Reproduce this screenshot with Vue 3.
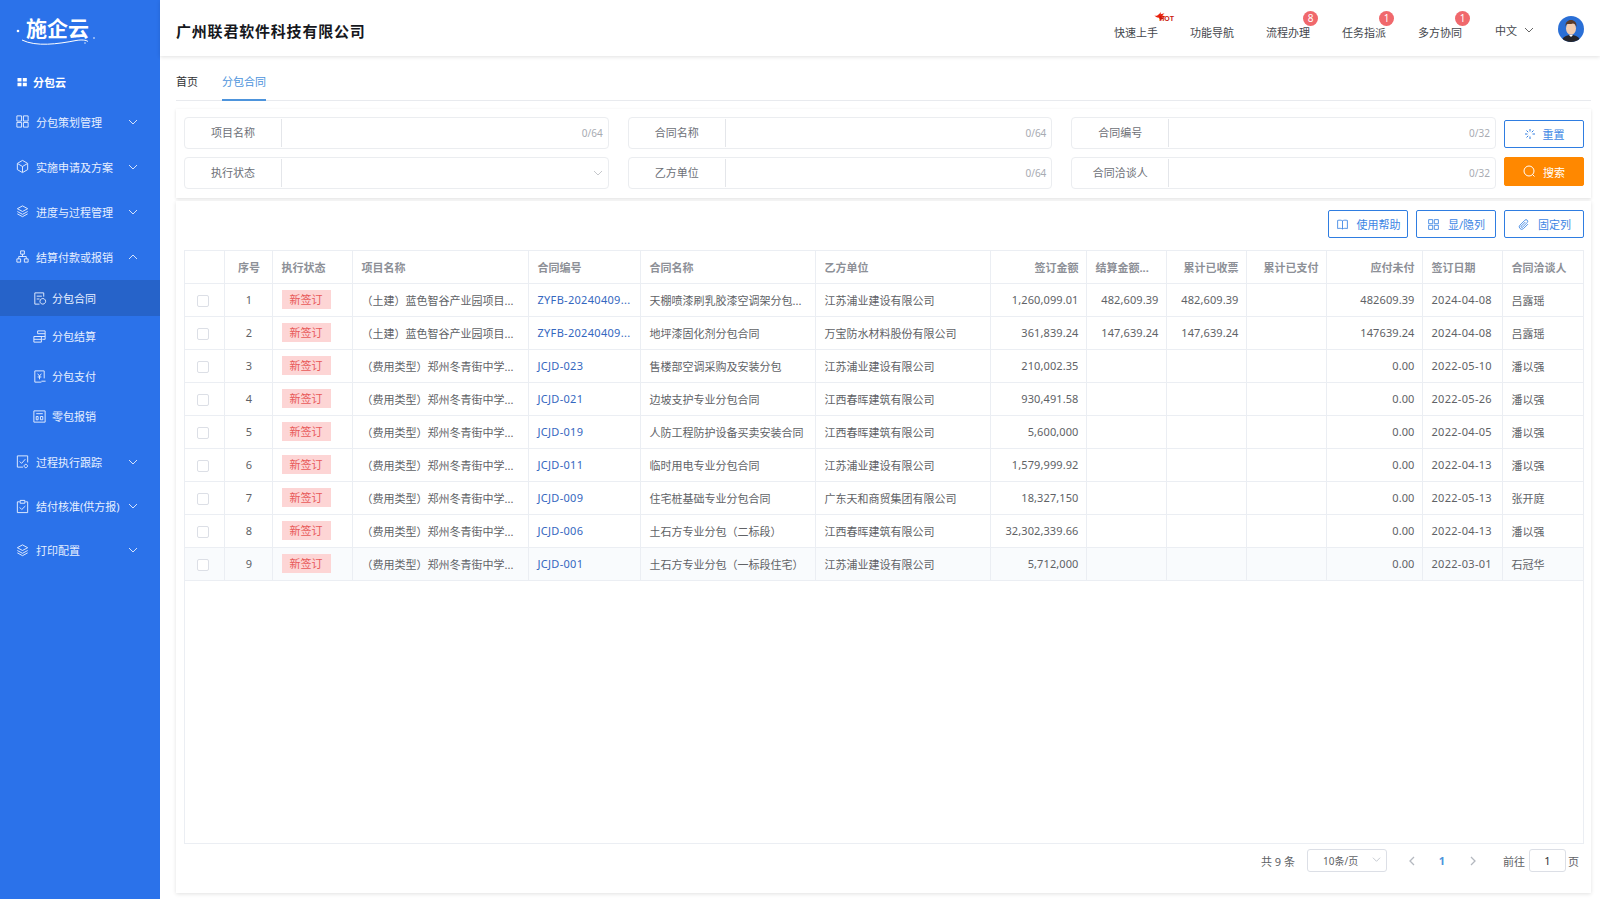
<script setup>
const layers = ['M8 2l5.500 3L8 8 2.500 5z', 'M2.500 8L8 11l5.500-3', 'M2.500 10.500L8 13.500l5.500-3']
const grid = ['M2 2h5v5H2z', 'M9 2h5v5H9z', 'M2 9h5v5H2z', 'M9 9h5v5H9z']

const menus = [
  { name: '分包策划管理', icon: ['M2 2h5v5.500H2z', 'M9 2h5v5.500H9z', 'M2 9h5v5H2z', 'M9 9h5v5H9z'], top: true },
  { name: '实施申请及方案', icon: ['M8 1.500l5.500 3.200v6.600L8 14.500l-5.500-3.200V4.700z', 'M3 5l5 3 5-3', 'M8 8v6'], top: true },
  { name: '进度与过程管理', icon: layers, top: true },
  { name: '结算付款或报销', icon: ['M6 2h4v3.500H6z', 'M2 10.500h4V14H2z', 'M10 10.500h4V14h-4z', 'M8 5.500V8M4 10.500V8h8v2.500'], open: true, top: true },
  { name: '分包合同', icon: ['M12.500 6V2H3v12h5', 'M5 5.500h5.500M5 8.500h3', 'M11.500 8a3 3 0 1 0 .01 0z'], active: true },
  { name: '分包结算', icon: ['M6 5V2h8v9h-3', 'M6 5h8M6 8h8', 'M2 8h8v6H2z', 'M2 11h8'] },
  { name: '分包支付', icon: ['M13 10V2H3v12h7', 'M6 5l2 2.500L10 5M8 7.500V11M6 8.500h4', 'M10 13h4.500'] },
  { name: '零包报销', icon: ['M2 2h12v12H2z', 'M4.500 5h7', 'M4.500 8h2v3.500h-2zM9 8h2.500v3.500H9z'] },
  { name: '过程执行跟踪', icon: ['M13.500 9V2h-11v12h6', 'M5 8l2 2 4-4.500', 'M11.500 11a1.800 1.800 0 1 0 .01 0z'], top: true },
  { name: '结付核准(供方报)', icon: ['M5 3H2.500v11.500h11V3H11', 'M5.500 1.500h5v3h-5z', 'M5 9l2.200 2.200L11 7.500'], top: true },
  { name: '打印配置', icon: layers, top: true }
]

const navs = [
  { name: '快速上手', hot: true },
  { name: '功能导航' },
  { name: '流程办理', badge: 8 },
  { name: '任务指派', badge: 1 },
  { name: '多方协同', badge: 1 }
]

const filters = [
  { label: '项目名称', count: '0/64' },
  { label: '合同名称', count: '0/64' },
  { label: '合同编号', count: '0/32' },
  { label: '执行状态', select: true },
  { label: '乙方单位', count: '0/64' },
  { label: '合同洽谈人', count: '0/32' }
]

const tools = [
  { name: '使用帮助', icon: ['M8 3.500C6.500 2.500 4 2.500 2 3v10c2-.5 4.500-.5 6 .5 1.500-1 4-1 6-.5V3c-2-.5-4.500-.5-6 .5z', 'M8 3.500v10'] },
  { name: '显/隐列', icon: grid },
  { name: '固定列', icon: ['M13.500 7.500l-5.500 5.500a3 3 0 0 1-4.300-4.300l6-6a2 2 0 0 1 2.900 2.800l-5.800 5.800a1 1 0 0 1-1.500-1.400l5-5'] }
]

const widths = [39, 48, 80, 176, 112, 175, 175, 96, 80, 80, 80, 96, 80, 81]

const fee = '（费用类型）郑州冬青街中学...'
const rows = [
  { project: '（土建）蓝色智谷产业园项目...', code: 'ZYFB-20240409...', name: '天棚喷漆刷乳胶漆空调架分包...', unit: '江苏浦业建设有限公司', amount: '1,260,099.01', settled: '482,609.39', invoiced: '482,609.39', unpaid: '482609.39', date: '2024-04-08', person: '吕露瑶' },
  { project: '（土建）蓝色智谷产业园项目...', code: 'ZYFB-20240409...', name: '地坪漆固化剂分包合同', unit: '万宝防水材料股份有限公司', amount: '361,839.24', settled: '147,639.24', invoiced: '147,639.24', unpaid: '147639.24', date: '2024-04-08', person: '吕露瑶' },
  { project: fee, code: 'JCJD-023', name: '售楼部空调采购及安装分包', unit: '江苏浦业建设有限公司', amount: '210,002.35', unpaid: '0.00', date: '2022-05-10', person: '潘以强' },
  { project: fee, code: 'JCJD-021', name: '边坡支护专业分包合同', unit: '江西春晖建筑有限公司', amount: '930,491.58', unpaid: '0.00', date: '2022-05-26', person: '潘以强' },
  { project: fee, code: 'JCJD-019', name: '人防工程防护设备买卖安装合同', unit: '江西春晖建筑有限公司', amount: '5,600,000', unpaid: '0.00', date: '2022-04-05', person: '潘以强' },
  { project: fee, code: 'JCJD-011', name: '临时用电专业分包合同', unit: '江苏浦业建设有限公司', amount: '1,579,999.92', unpaid: '0.00', date: '2022-04-13', person: '潘以强' },
  { project: fee, code: 'JCJD-009', name: '住宅桩基础专业分包合同', unit: '广东天和商贸集团有限公司', amount: '18,327,150', unpaid: '0.00', date: '2022-05-13', person: '张开庭' },
  { project: fee, code: 'JCJD-006', name: '土石方专业分包（二标段）', unit: '江西春晖建筑有限公司', amount: '32,302,339.66', unpaid: '0.00', date: '2022-04-13', person: '潘以强' },
  { project: fee, code: 'JCJD-001', name: '土石方专业分包（一标段住宅）', unit: '江苏浦业建设有限公司', amount: '5,712,000', unpaid: '0.00', date: '2022-03-01', person: '石冠华' }
]
</script>

<template>
  <div class="page">
    <aside class="sidebar">
      <div class="logo">
        <span class="logo-text">施企云</span>
        <svg class="logo-swoosh" width="95" height="45" viewBox="0 0 95 45">
          <circle cx="8" cy="21" r="1.300" fill="#fff" />
          <path d="M12 30c14 7 36 4 54 .5 6-1 10-.5 12 1" fill="none" stroke="#fff" stroke-width="1" />
          <circle cx="75" cy="33" r=".7" fill="#fff" />
          <circle cx="84" cy="28" r=".8" fill="#fff" />
        </svg>
      </div>
      <div class="home-item">
        <svg width="12" height="12" viewBox="0 0 12 12" fill="#fff">
          <path d="M1.500 2h4v3.500h-4zM6.800 2h4v3.500h-4zM1.500 6.800h4v3.500h-4zM6.800 6.800h4v3.500h-4z" />
        </svg>
        <span>分包云</span>
      </div>
      <div
        v-for="m in menus"
        :key="m.name"
        class="menu-item"
        :class="{ top: m.top, sub: !m.top, active: m.active }"
      >
        <svg class="menu-icon" width="15" height="15" viewBox="0 0 16 16">
          <path v-for="d in m.icon" :key="d" :d="d" />
        </svg>
        <span class="menu-name">{{ m.name }}</span>
        <svg v-if="m.top" class="menu-arrow" width="10" height="10" viewBox="0 0 10 10">
          <path :d="m.open ? 'M1 7l4-4 4 4' : 'M1 3l4 4 4-4'" />
        </svg>
      </div>
    </aside>

    <div class="main">
      <header class="header">
        <div class="company">广州联君软件科技有限公司</div>
        <nav class="nav">
          <div v-for="n in navs" :key="n.name" class="nav-item">
            {{ n.name }}
            <span v-if="n.badge" class="badge">{{ n.badge }}</span>
            <span v-if="n.hot" class="hot">
              <svg width="14" height="9" viewBox="0 0 10 8"><path d="M0 3c2 1 3 0 4-1L6 0 5.500 2 9 1 7 3l3 1-3 1-1 3-2-3C2 5 1 4 0 3z" fill="#e8220e" /></svg>
              <b>HOT</b>
            </span>
          </div>
        </nav>
        <div class="lang">
          中文
          <svg width="10" height="10" viewBox="0 0 10 10"><path d="M1 3l4 4 4-4" fill="none" stroke="#666" /></svg>
        </div>
        <svg class="avatar" width="26" height="26" viewBox="0 0 26 26">
          <defs><clipPath id="avatar-clip"><circle cx="13" cy="13" r="13" /></clipPath></defs>
          <g clip-path="url(#avatar-clip)">
            <rect width="26" height="26" fill="#2a6fd6" />
            <path d="M4 26c0-5 4-7 9-7s9 2 9 7z" fill="#26262c" />
            <path d="M11 19l2 2 2-2z" fill="#fff" />
            <ellipse cx="13" cy="12.500" rx="5" ry="6.300" fill="#f2cdb0" />
            <path d="M7.500 11c-.5-5 2.500-7 5.500-7s6 2 5.500 7c-1-2.500-2-3.500-3.500-3.500-2 .8-5 .5-6 .5-.8.500-1.200 1.500-1.500 3z" fill="#5a3b2a" />
          </g>
        </svg>
      </header>

      <div class="content">
        <div class="tabs">
          <span class="tab">首页</span>
          <span class="tab current">分包合同</span>
        </div>

        <section class="filter-card">
          <div class="fields">
            <div v-for="f in filters" :key="f.label" class="field">
              <label>{{ f.label }}</label>
              <div class="field-input">
                <span v-if="f.count">{{ f.count }}</span>
                <svg v-else width="10" height="10" viewBox="0 0 10 10"><path d="M1 3l4 4 4-4" fill="none" stroke="#c6c8cc" /></svg>
              </div>
            </div>
          </div>
          <div class="actions">
            <button class="btn reset">
              <svg width="12" height="12" viewBox="0 0 12 12"><path d="M6 1v2.500M6 8.500V11M1 6h2.500M8.500 6H11M2.500 2.500l1.700 1.700M9.500 2.500L7.800 4.200M2.500 9.500l1.700-1.700" fill="none" stroke="#2f7de1" /></svg>
              重置
            </button>
            <button class="btn search">
              <svg width="13" height="13" viewBox="0 0 13 13"><circle cx="6" cy="6" r="5" fill="none" stroke="#fff" /><path d="M9.500 9.500l2 2" stroke="#fff" /></svg>
              搜索
            </button>
          </div>
        </section>

        <section class="table-card">
          <div class="toolbar">
            <button v-for="t in tools" :key="t.name" class="btn tool">
              <svg width="13" height="13" viewBox="0 0 16 16"><path v-for="d in t.icon" :key="d" :d="d" fill="none" stroke="#2f7de1" /></svg>
              {{ t.name }}
            </button>
          </div>

          <div class="table-wrap">
            <table>
              <colgroup>
                <col v-for="(w, i) in widths" :key="i" :style="{ width: w + 'px' }" />
              </colgroup>
              <thead>
                <tr>
                  <th></th>
                  <th class="center">序号</th>
                  <th>执行状态</th>
                  <th>项目名称</th>
                  <th>合同编号</th>
                  <th>合同名称</th>
                  <th>乙方单位</th>
                  <th class="right">签订金额</th>
                  <th>结算金额...</th>
                  <th class="right">累计已收票</th>
                  <th class="right">累计已支付</th>
                  <th class="right">应付未付</th>
                  <th>签订日期</th>
                  <th>合同洽谈人</th>
                </tr>
              </thead>
              <tbody>
                <tr v-for="(r, i) in rows" :key="i" :class="{ hover: i === 8 }">
                  <td class="center"><span class="check"></span></td>
                  <td class="center">{{ i + 1 }}</td>
                  <td><span class="tag">新签订</span></td>
                  <td>{{ r.project }}</td>
                  <td class="link">{{ r.code }}</td>
                  <td>{{ r.name }}</td>
                  <td>{{ r.unit }}</td>
                  <td class="right amount">{{ r.amount }}</td>
                  <td class="right amount">{{ r.settled }}</td>
                  <td class="right amount">{{ r.invoiced }}</td>
                  <td class="right"></td>
                  <td class="right amount">{{ r.unpaid }}</td>
                  <td class="date">{{ r.date }}</td>
                  <td>{{ r.person }}</td>
                </tr>
              </tbody>
            </table>
          </div>

          <div class="pager">
            <span class="total">共 9 条</span>
            <div class="size">
              10条/页
              <svg width="9" height="9" viewBox="0 0 10 10"><path d="M1 3l4 4 4-4" fill="none" stroke="#c0c4cc" /></svg>
            </div>
            <svg class="page-arrow" width="10" height="10" viewBox="0 0 10 10"><path d="M7 1L3 5l4 4" fill="none" stroke="#b4b8bf" stroke-width="1.300" /></svg>
            <span class="page-num">1</span>
            <svg class="page-arrow" width="10" height="10" viewBox="0 0 10 10"><path d="M3 1l4 4-4 4" fill="none" stroke="#b4b8bf" stroke-width="1.300" /></svg>
            <span class="goto">前往</span>
            <div class="page-input">1</div>
            <span>页</span>
          </div>
        </section>
      </div>
    </div>
  </div>
</template>

<style>
html, body {
  margin: 0;
  background: #fff;
}
</style>

<style scoped>
.page {
  display: flex;
  height: 899px;
  overflow: hidden;
  font-family: "Noto Sans", "Noto Sans CJK SC", sans-serif;
  font-size: 11px;
  color: #606266;
}

.sidebar {
  width: 160px;
  flex: none;
  background: #2b72ea;
  color: #fff;
}

.logo {
  position: relative;
  height: 64px;
  box-sizing: border-box;
  padding: 14px 0 0 26px;
}

.logo-text {
  font-size: 21px;
  line-height: 28px;
  font-weight: 700;
  color: #fff;
}

.logo-swoosh {
  position: absolute;
  left: 10px;
  top: 10px;
}

.home-item {
  display: flex;
  align-items: center;
  gap: 5px;
  height: 35px;
  padding-left: 16px;
  font-weight: 700;
}

.menu-item {
  display: flex;
  align-items: center;
  color: #e6efff;
}

.menu-item.top {
  height: 45px;
  padding: 0 22px 0 15px;
}

.menu-item.sub {
  height: 40px;
  padding-left: 32px;
}

.menu-item.active {
  height: 36px;
  margin-top: 1px;
  background: #2663c9;
}

.sub + .top {
  margin-top: 3px;
}

.sub + .top ~ .top {
  height: 44px;
}

.menu-icon {
  flex: none;
  fill: none;
  stroke: #e6efff;
  stroke-width: 1;
}

.menu-name {
  flex: 1;
  margin-left: 6px;
  white-space: nowrap;
}

.sub .menu-name {
  margin-left: 5px;
}

.menu-arrow {
  flex: none;
  fill: none;
  stroke: #d5e3fb;
}

.main {
  flex: 1;
  min-width: 0;
  display: flex;
  flex-direction: column;
}

.header {
  height: 56px;
  flex: none;
  display: flex;
  align-items: center;
  padding: 0 16px;
  background: #fff;
  box-shadow: 0 1px 4px rgba(0, 0, 0, 0.12);
  position: relative;
  z-index: 1;
}

.company {
  flex: 1;
  padding-top: 4px;
  font-size: 15px;
  font-weight: 700;
  letter-spacing: 0.8px;
  color: #16181d;
}

.nav {
  display: flex;
  gap: 32px;
  margin-right: 33px;
}

.nav-item {
  position: relative;
  padding-top: 10px;
  line-height: 16px;
  color: #44474d;
  white-space: nowrap;
}

.badge {
  position: absolute;
  top: -4px;
  right: -8px;
  width: 15px;
  height: 15px;
  border-radius: 50%;
  background: #f0686c;
  color: #fff;
  font-size: 10px;
  line-height: 15px;
  text-align: center;
}

.hot {
  position: absolute;
  top: -3px;
  right: -16px;
  width: 21px;
  height: 12px;
}

.hot svg {
  position: absolute;
  left: 0;
  top: 0;
}

.hot b {
  position: absolute;
  right: 0;
  top: 3px;
  font-size: 7px;
  line-height: 8px;
  color: #c9180c;
  font-family: "Liberation Sans", sans-serif;
}

.lang {
  display: flex;
  align-items: center;
  gap: 7px;
  margin-right: 24px;
  padding-top: 3px;
  color: #44474d;
}

.avatar {
  flex: none;
  margin-top: 2px;
}

.content {
  flex: 1;
  min-height: 0;
  display: flex;
  flex-direction: column;
  padding: 0 9px 6px 16px;
}

.tabs {
  height: 45px;
  flex: none;
  display: flex;
  gap: 24px;
  box-sizing: border-box;
  margin-bottom: 8px;
  border-bottom: 1px solid #e8eaee;
}

.tab {
  height: 45px;
  box-sizing: border-box;
  padding-top: 18px;
  line-height: 16px;
  color: #303133;
}

.tab.current {
  color: #4d94dc;
  border-bottom: 2px solid #4d94dc;
}

.filter-card {
  display: flex;
  gap: 8px;
  flex: none;
  height: 89px;
  box-sizing: border-box;
  padding: 8px 7px 8px 8px;
  background: #fff;
  box-shadow: 0 1px 3px rgba(0, 0, 0, 0.12);
}

.fields {
  flex: 1;
  display: grid;
  grid-template-columns: repeat(3, 1fr);
  grid-auto-rows: 32px;
  column-gap: 19px;
  row-gap: 8px;
}

.field {
  display: flex;
  border: 1px solid #ebedf0;
  border-radius: 4px;
  box-sizing: border-box;
}

.field label {
  width: 97px;
  flex: none;
  box-sizing: border-box;
  margin: 1px 0;
  border-right: 1px solid #e4e6ea;
  line-height: 28px;
  text-align: center;
  color: #6d7077;
}

.field-input {
  flex: 1;
  display: flex;
  align-items: center;
  justify-content: flex-end;
  padding-right: 5px;
  color: #a8abb2;
  font-size: 10px;
}

.actions {
  width: 80px;
  flex: none;
  display: flex;
  flex-direction: column;
  align-items: stretch;
  padding-top: 3px;
  gap: 9px;
}

.btn {
  display: flex;
  align-items: center;
  justify-content: center;
  gap: 7px;
  box-sizing: border-box;
  padding: 0;
  border: 1px solid #2f7de1;
  border-radius: 2px;
  background: #fff;
  color: #3d86e4;
  font-family: inherit;
  font-size: 11px;
}

.btn.reset {
  height: 28px;
}

.btn.search {
  height: 29px;
  border-color: #ff8800;
  background: #ff8800;
  color: #fff;
}

.table-card {
  flex: 1;
  min-height: 0;
  display: flex;
  flex-direction: column;
  margin-top: 3px;
  padding: 9px 7px 0 8px;
  background: #fff;
  box-shadow: 0 1px 4px rgba(0, 0, 0, 0.12);
}

.toolbar {
  flex: none;
  display: flex;
  justify-content: flex-end;
  gap: 8px;
  height: 28px;
  margin-bottom: 12px;
}

.btn.tool {
  width: 80px;
  gap: 8px;
}

.table-wrap {
  flex: 1;
  min-height: 0;
  border: 1px solid #ebeef3;
}

table {
  width: 1398px;
  table-layout: fixed;
  border-collapse: collapse;
}

th, td {
  height: 33px;
  box-sizing: border-box;
  padding: 0 7px 0 9px;
  border: 1px solid #ebeef3;
  text-align: left;
  white-space: nowrap;
  overflow: hidden;
  font-size: 11px;
  font-weight: 400;
}

th {
  height: 32px;
  font-weight: 700;
  color: #8d9097;
}

th:first-child, td:first-child {
  border-left: 0;
}

th:last-child, td:last-child {
  border-right: 0;
}

thead th {
  border-top: 0;
}

td:first-child {
  padding: 0 10px 0 8px;
}

.center {
  text-align: center;
}

.right {
  text-align: right;
}

.link {
  color: #3567c0;
  letter-spacing: 0.3px;
}

.amount {
  letter-spacing: 0.1px;
}

.date {
  letter-spacing: 0.3px;
}

.hover td {
  background: #f9fbfd;
}

.check {
  display: inline-block;
  box-sizing: border-box;
  width: 12px;
  height: 12px;
  vertical-align: middle;
  border: 1px solid #dcdfe6;
  border-radius: 2px;
  background: #fff;
}

.tag {
  display: inline-block;
  width: 49px;
  height: 19px;
  line-height: 19px;
  text-align: center;
  vertical-align: middle;
  background: #fdd5d5;
  color: #e85a5a;
}

.pager {
  flex: none;
  height: 49px;
  box-sizing: border-box;
  display: flex;
  align-items: center;
  justify-content: flex-end;
  padding: 0 5px 16px 0;
  color: #606266;
}

.total {
  margin-right: 12px;
}

.size {
  width: 80px;
  height: 23px;
  box-sizing: border-box;
  display: flex;
  align-items: center;
  justify-content: space-between;
  padding: 0 5px 0 15px;
  margin-right: 20px;
  border: 1px solid #dcdfe6;
  border-radius: 3px;
  font-size: 10px;
}

.size svg {
  margin-bottom: 3px;
}

.page-num {
  width: 20px;
  margin: 0 16px 0 15px;
  text-align: center;
  color: #4d94dc;
  font-weight: 700;
}

.goto {
  margin-left: 25px;
  margin-right: 4px;
}

.page-input {
  width: 37px;
  height: 23px;
  box-sizing: border-box;
  margin-right: 2px;
  border: 1px solid #dcdfe6;
  border-radius: 3px;
  line-height: 21px;
  text-align: center;
  color: #303133;
}
</style>
